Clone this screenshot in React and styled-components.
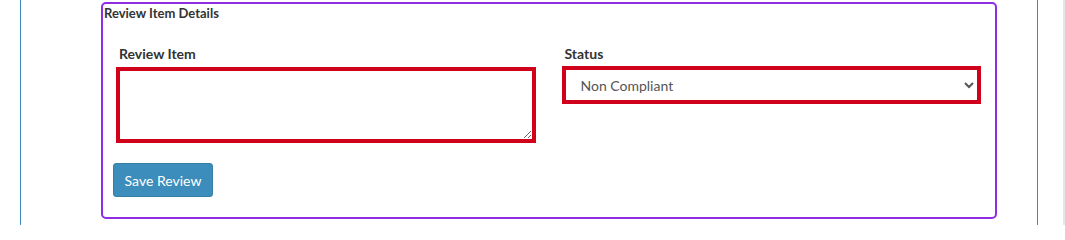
import React from "react";
import styled, { createGlobalStyle } from "styled-components";

const GlobalStyle = createGlobalStyle`
	html, body {
		margin: 0;
		padding: 0;
		background: #fff;
	}
	body {
		font-family: Lato, "Liberation Sans", sans-serif;
		color: #333;
	}
`;

const Page = styled.div`
	display: flex;
	width: 1065px;
	height: 225px;
	overflow: hidden;
`;

const Panel = styled.div`
	margin-left: 20px;
	width: 1018px;
	border-left: 1px solid #3c8dbc;
	border-right: 1px solid #3c8dbc;
	padding: 2px 0 0 80px;
	box-sizing: border-box;
`;

const Gutter = styled.div`
	margin-left: auto;
	width: 2px;
	background: #e6e6e6;
`;

const Fieldset = styled.div`
	width: 896px;
	box-sizing: border-box;
	border: 2px solid #8e2de2;
	border-radius: 5px;
	padding: 0 0 20px 1px;
`;

const Legend = styled.div`
	font-size: 13px;
	font-weight: 700;
	line-height: 18px;
	color: #333;
`;

const Row = styled.div`
	display: grid;
	grid-template-columns: 1fr 1fr;
	column-gap: 26px;
	padding: 22px 14px 0 12px;
`;

const Field = styled.div`
	display: flex;
	flex-direction: column;
`;

const Label = styled.label`
	font-size: 14px;
	font-weight: 700;
	line-height: 20px;
	margin: 0 0 ${(p) => p.$gap}px 3px;
	color: #333;
`;

const TextArea = styled.textarea`
	height: 76px;
	box-sizing: border-box;
	border: 4px solid #d0021b;
	border-radius: 0;
	padding: 6px 12px;
	font-family: inherit;
	font-size: 14px;
	outline: none;
`;

const Select = styled.select`
	height: 38px;
	box-sizing: border-box;
	border: 4px solid #d0021b;
	border-radius: 0;
	padding: 0 8px 0 11px;
	background: #fff;
	font-family: inherit;
	font-size: 14px;
	color: #555;
	outline: none;
`;

const Button = styled.button`
	margin: 20px 0 0 9px;
	width: 100px;
	height: 34px;
	background: #3c8dbc;
	border: 1px solid #367fa9;
	border-radius: 3px;
	color: #fff;
	font-family: inherit;
	font-size: 14px;
	cursor: pointer;
`;

export default function App() {
	return (
		<>
			<GlobalStyle />
			<Page>
				<Panel>
					<Fieldset>
						<Legend>Review Item Details</Legend>
						<Row>
							<Field>
								<Label $gap={3}>Review Item</Label>
								<TextArea />
							</Field>
							<Field>
								<Label $gap={2}>Status</Label>
								<Select defaultValue="nc">
									<option value="c">Compliant</option>
									<option value="nc">Non Compliant</option>
								</Select>
							</Field>
						</Row>
						<Button>Save Review</Button>
					</Fieldset>
				</Panel>
				<Gutter />
			</Page>
		</>
	);
}
